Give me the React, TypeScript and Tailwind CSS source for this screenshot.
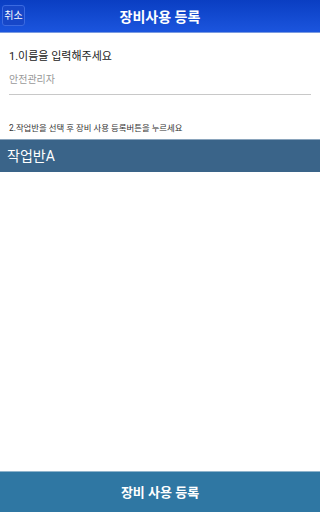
export default function App() {
  return (
    <div
      className="flex h-[512px] w-full flex-col bg-white"
      style={{ fontFamily: 'Roboto, "Noto Sans CJK KR", sans-serif' }}
    >
      <header className="relative flex h-[33px] shrink-0 items-center justify-center border-b border-[#7a9ae0] bg-gradient-to-b from-[#0a3ec2] to-[#1b55de]">
        <button className="absolute left-[2px] top-[5px] flex h-[21px] w-[23px] items-center justify-center rounded-[3px] border border-[#3b6ae0] bg-[#1747c8] text-[10px] leading-none text-white">
          취소
        </button>
        <h1 className="pt-[1px] text-[14px] font-bold leading-none text-white">장비사용 등록</h1>
      </header>

      <div className="px-[9px] pt-[18px]">
        <p className="text-[11px] leading-none text-[#222]">1.이름을 입력해주세요</p>
        <input
          className="mt-[12px] w-full border-b border-[#c8c8c8] pb-[9px] text-[10px] leading-none text-[#333] outline-none placeholder:text-[#999]"
          placeholder="안전관리자"
        />
        <p className="mt-[29px] text-[8.4px] leading-none text-[#333]">2.작업반을 선택 후 장비 사용 등록버튼을 누르세요</p>
      </div>

      <div className="mt-[7px] flex h-[33px] shrink-0 items-center border-t border-[#8aa4bc] bg-[#3a6489] px-[7px]">
        <span className="text-[14px] leading-none text-white">작업반A</span>
      </div>

      <div className="flex-1" />

      <button className="flex h-[41px] shrink-0 items-center justify-center border-t border-[#8fb4cc] bg-[#2f77a3] text-[13px] font-bold leading-none text-white">
        장비 사용 등록
      </button>
    </div>
  );
}
